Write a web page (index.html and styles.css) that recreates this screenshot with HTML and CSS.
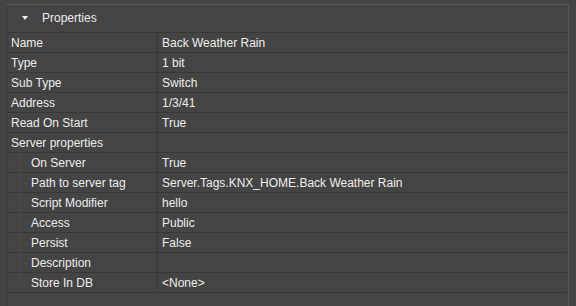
FILE: index.html
```html
<!DOCTYPE html>
<html lang="en">
<head>
  <meta charset="UTF-8" />
  <title>Properties</title>
  <link rel="stylesheet" href="styles.css">
</head>
<body>
  <div class="panel">
    <div class="panel-header">
      <span class="toggle">
        <svg width="6" height="4" viewBox="0 0 6 4"><path d="M0 0h6L3 4z" fill="#f0f0f0"/></svg>
      </span>
      <span>Properties</span>
    </div>
    <div class="grid">
      <div class="fila"><div class="clave">Name</div><div class="valor">Back Weather Rain</div></div>
      <div class="fila"><div class="clave">Type</div><div class="valor">1 bit</div></div>
      <div class="fila"><div class="clave">Sub Type</div><div class="valor">Switch</div></div>
      <div class="fila"><div class="clave">Address</div><div class="valor">1/3/41</div></div>
      <div class="fila"><div class="clave">Read On Start</div><div class="valor">True</div></div>
      <div class="fila"><div class="clave">Server properties</div><div class="valor"></div></div>
      <div class="fila hijo"><div class="clave">On Server</div><div class="valor">True</div></div>
      <div class="fila hijo"><div class="clave">Path to server tag</div><div class="valor">Server.Tags.KNX_HOME.Back Weather Rain</div></div>
      <div class="fila hijo"><div class="clave">Script Modifier</div><div class="valor">hello</div></div>
      <div class="fila hijo"><div class="clave">Access</div><div class="valor">Public</div></div>
      <div class="fila hijo"><div class="clave">Persist</div><div class="valor">False</div></div>
      <div class="fila hijo"><div class="clave">Description</div><div class="valor"></div></div>
      <div class="fila hijo ultimo"><div class="clave">Store In DB</div><div class="valor">&lt;None&gt;</div></div>
    </div>
  </div>
</body>
</html>
```

FILE: styles.css
```css
body {
  margin: 0;
  background: #444444;
  font-family: "Liberation Sans", Arial, sans-serif;
  font-size: 12px;
  color: #ededed;
  height: 306px;
  overflow: hidden;
}

.panel {
  margin: 4px 7px 0 6px;
  border-top: 1px solid #575757;
  border-left: 1px solid #3a3a3a;
  border-right: 1px solid #575757;
  height: 302px;
  box-sizing: border-box;
  padding-left: 1px;
}

.panel-header {
  height: 27px;
  box-sizing: border-box;
  padding: 0 0 2px 14px;
  display: flex;
  align-items: center;
}

.toggle {
  width: 20px;
  display: flex;
  align-items: center;
}

.grid {
  border-top: 1px solid #383838;
  margin-right: 1px;
}

.fila {
  display: flex;
  height: 20px;
  border-bottom: 1px solid #383838;
  box-sizing: border-box;
  position: relative;
}

.clave {
  width: 150px;
  box-sizing: border-box;
  border-right: 1px solid #383838;
  padding-left: 3px;
  line-height: 20px;
  height: 19px;
  white-space: nowrap;
}

.valor {
  padding-left: 4px;
  line-height: 20px;
  height: 19px;
  white-space: nowrap;
}

.hijo .clave {
  padding-left: 23px;
}

.hijo::before {
  content: "";
  position: absolute;
  left: 11px;
  top: -1px;
  height: 21px;
  border-left: 1px solid #4f4c45;
}

.hijo.ultimo::before {
  height: 11px;
}

.hijo::after {
  content: "";
  position: absolute;
  left: 11px;
  top: 10px;
  width: 9px;
  border-top: 1px solid #4f4c45;
}
```
